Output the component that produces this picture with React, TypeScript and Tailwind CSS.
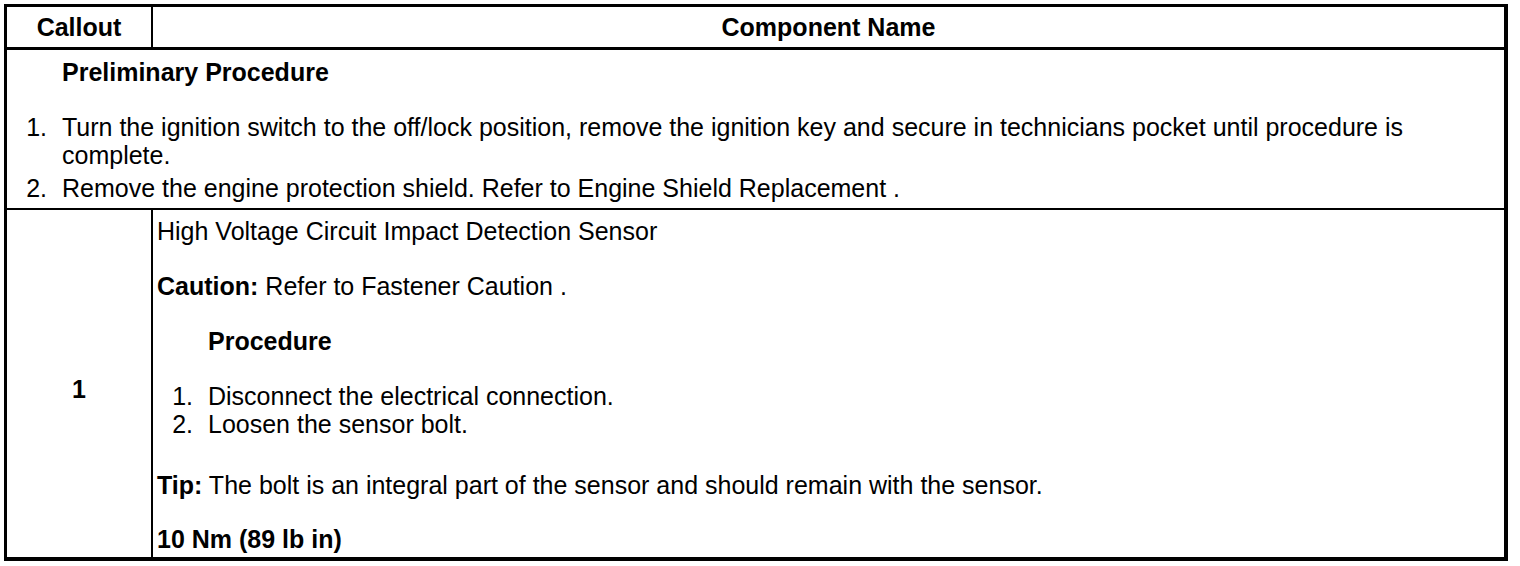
import React from 'react';

const prelim = [
  'Turn the ignition switch to the off/lock position, remove the ignition key and secure in technicians pocket until procedure is complete.',
  'Remove the engine protection shield. Refer to Engine Shield Replacement .',
];

const steps = ['Disconnect the electrical connection.', 'Loosen the sensor bolt.'];

function Step({ n, text, className = '' }: { n: number; text: string; className?: string }) {
  return (
    <div className={'grid grid-cols-[55px_1fr] ' + className}>
      <span className="pr-[15px] text-right">{n}.</span>
      <span>{text}</span>
    </div>
  );
}

export default function App() {
  return (
    <div
      className="min-h-screen bg-white p-1 text-[25px] leading-[28px] text-black"
      style={{ fontFamily: '"Liberation Sans", Arial, Helvetica, sans-serif' }}
    >
      <div className="w-[1504px] border-b-[4px] border-l-[3px] border-r-[4px] border-t-[3px] border-black">
        {/* header */}
        <div className="flex h-[43px] border-b-[3px] border-black font-bold">
          <div className="flex w-[146px] items-center justify-center border-r-[2px] border-black">Callout</div>
          <div className="flex flex-1 items-center justify-center">Component Name</div>
        </div>

        {/* preliminary */}
        <div className="border-b-[2px] border-black pb-[6px] pt-[8px]">
          <div className="pl-[55px] font-bold">Preliminary Procedure</div>
          <Step n={1} text={prelim[0]} className="mt-[27px] pr-[60px]" />
          <Step n={2} text={prelim[1]} className="mt-[5px]" />
        </div>

        {/* callout 1 */}
        <div className="flex">
          <div className="flex w-[146px] items-center justify-center border-r-[2px] border-black pt-[10px] font-bold">1</div>
          <div className="flex-1 pb-[4px] pt-[7px]">
            <p className="pl-[4px]">High Voltage Circuit Impact Detection Sensor</p>
            <p className="mt-[27px] pl-[4px]">
              <span className="font-bold">Caution:</span> Refer to Fastener Caution .
            </p>
            <p className="mt-[27px] pl-[55px] font-bold">Procedure</p>
            <div className="mt-[27px]">
              {steps.map((s, i) => (
                <Step key={i} n={i + 1} text={s} />
              ))}
            </div>
            <p className="mt-[33px] pl-[4px]">
              <span className="font-bold">Tip:</span> The bolt is an integral part of the sensor and should remain with the sensor.
            </p>
            <p className="mt-[26px] pl-[4px] font-bold">10 Nm (89 lb in)</p>
          </div>
        </div>
      </div>
    </div>
  );
}
